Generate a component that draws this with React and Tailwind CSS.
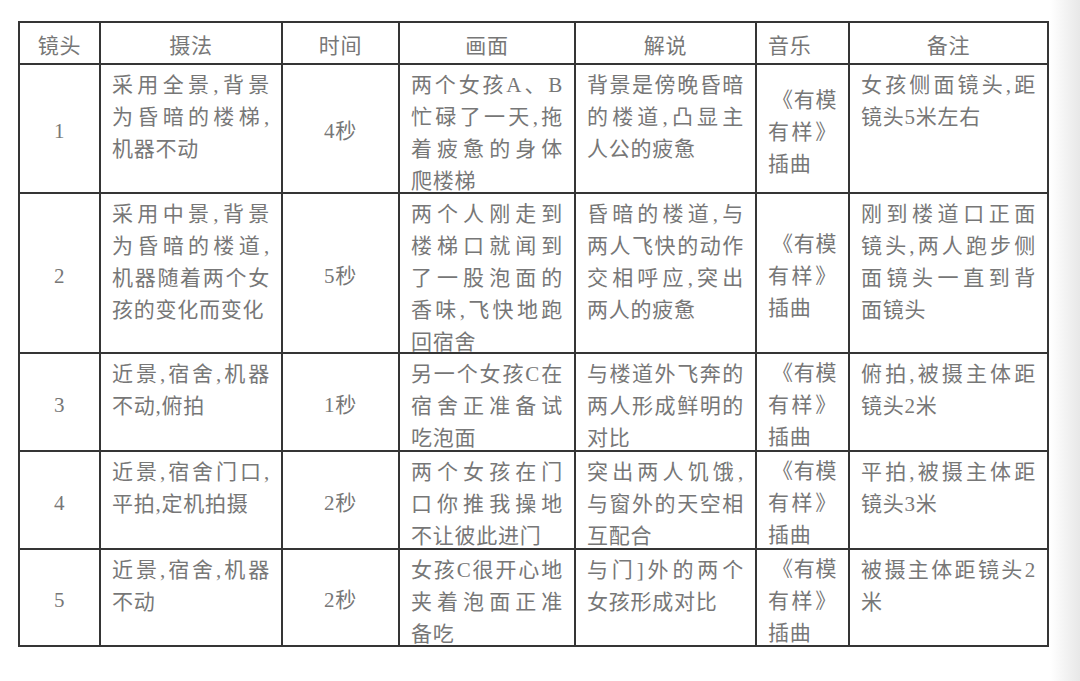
import React from "react"

const rows = [
  {
    no: "1",
    h: "h-[129px]",
    method: ["采用全景,背景", "为昏暗的楼梯,", "机器不动"],
    time: "4秒",
    scene: ["两个女孩A、B", "忙碌了一天,拖", "着疲惫的身体", "爬楼梯"],
    note: ["背景是傍晚昏暗", "的楼道,凸显主", "人公的疲惫"],
    remark: ["女孩侧面镜头,距", "镜头5米左右"],
  },
  {
    no: "2",
    h: "h-[160px]",
    method: ["采用中景,背景", "为昏暗的楼道,", "机器随着两个女", "孩的变化而变化"],
    time: "5秒",
    scene: ["两个人刚走到", "楼梯口就闻到", "了一股泡面的", "香味,飞快地跑", "回宿舍"],
    note: ["昏暗的楼道,与", "两人飞快的动作", "交相呼应,突出", "两人的疲惫"],
    remark: ["刚到楼道口正面", "镜头,两人跑步侧", "面镜头一直到背", "面镜头"],
  },
  {
    no: "3",
    h: "h-[98px]",
    method: ["近景,宿舍,机器", "不动,俯拍"],
    time: "1秒",
    scene: ["另一个女孩C在", "宿舍正准备试", "吃泡面"],
    note: ["与楼道外飞奔的", "两人形成鲜明的", "对比"],
    remark: ["俯拍,被摄主体距", "镜头2米"],
  },
  {
    no: "4",
    h: "h-[98px]",
    method: ["近景,宿舍门口,", "平拍,定机拍摄"],
    time: "2秒",
    scene: ["两个女孩在门", "口你推我操地", "不让彼此进门"],
    note: ["突出两人饥饿,", "与窗外的天空相", "互配合"],
    remark: ["平拍,被摄主体距", "镜头3米"],
  },
  {
    no: "5",
    h: "h-[97px]",
    method: ["近景,宿舍,机器", "不动"],
    time: "2秒",
    scene: ["女孩C很开心地", "夹着泡面正准", "备吃"],
    note: ["与门]外的两个", "女孩形成对比"],
    remark: ["被摄主体距镜头2", "米"],
  },
]

// every wrapped line is stretched to the cell width, the last one is not
const Lines = ({ lines }) => (
  <div className="-mb-[6px]">
    {lines.map((line, i) => (
      <div
        key={i}
        className={
          i < lines.length - 1
            ? "whitespace-nowrap text-justify [text-align-last:justify]"
            : "whitespace-nowrap text-left"
        }
      >
        {line}
      </div>
    ))}
  </div>
)

const Music = () => (
  <div className="-mb-[6px]">
    <div className="whitespace-nowrap text-justify [text-align-last:justify]">
      <span className="pl-[4px]">《</span>有模
    </div>
    <div className="whitespace-nowrap text-justify [text-align-last:justify]">有样》</div>
    <div className="whitespace-nowrap text-left">插曲</div>
  </div>
)

const cell = "border-2 border-[#353535] px-[11px]"
const topCell = `${cell} align-top pt-[4px]`
const midCell = `${cell} align-middle text-center pt-[5px]`

const App = () => {
  return (
    <div
      className="flex w-[1080px] h-[681px] bg-white text-[#777777] text-[21px] leading-[32px] tracking-[0.75px]"
      style={{ fontFamily: "'Liberation Serif', 'Noto Sans CJK SC', serif" }}
    >
      <div className="flex-1 pt-[21px] pl-[18px]">
        <table className="border-collapse table-fixed w-[1029px]">
          <colgroup>
            <col className="w-[81px]" />
            <col className="w-[182px]" />
            <col className="w-[117px]" />
            <col className="w-[176px]" />
            <col className="w-[181px]" />
            <col className="w-[93px]" />
            <col className="w-[199px]" />
          </colgroup>
          <thead>
            <tr className="h-[42px]">
              <th className={`${midCell} font-normal`}>镜头</th>
              <th className={`${midCell} font-normal`}>摄法</th>
              <th className={`${midCell} font-normal`}>时间</th>
              <th className={`${midCell} font-normal`}>画面</th>
              <th className={`${midCell} font-normal`}>解说</th>
              <th className={`${cell} align-middle text-left font-normal pt-[5px]`}>音乐</th>
              <th className={`${midCell} font-normal`}>备注</th>
            </tr>
          </thead>
          <tbody>
            {rows.map((r) => (
              <tr key={r.no} className={r.h}>
                <td className={midCell}>{r.no}</td>
                <td className={topCell}>
                  <Lines lines={r.method} />
                </td>
                <td className={midCell}>{r.time}</td>
                <td className={topCell}>
                  <Lines lines={r.scene} />
                </td>
                <td className={topCell}>
                  <Lines lines={r.note} />
                </td>
                <td className={`${cell} align-middle`}>
                  <Music />
                </td>
                <td className={topCell}>
                  <Lines lines={r.remark} />
                </td>
              </tr>
            ))}
          </tbody>
        </table>
      </div>
      <div className="w-[30px] h-full bg-linear-to-r from-white to-[#e8e8e8]" />
    </div>
  )
}

export default App
